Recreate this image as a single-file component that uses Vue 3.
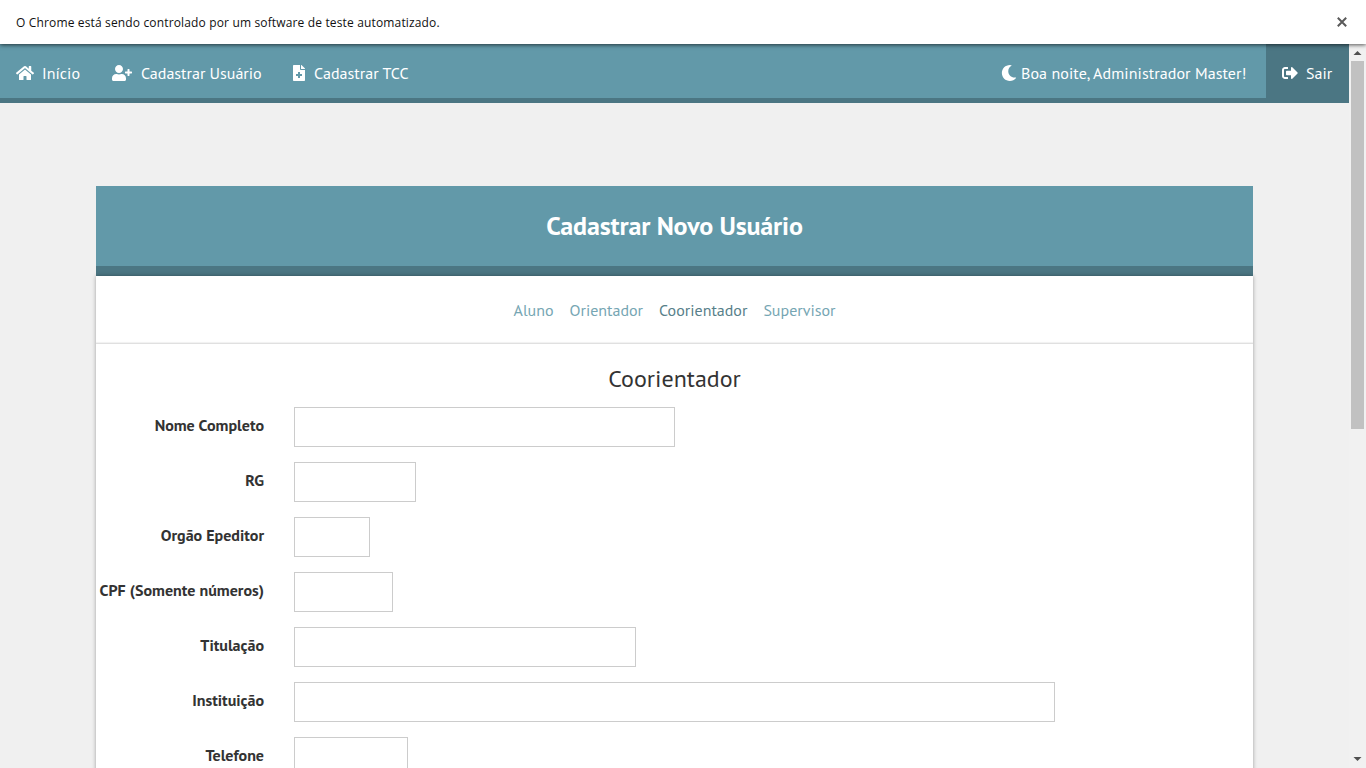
<script setup>
const icons = {
  home: { w: 576, d: 'M280.37 148.26L96 300.11V464a16 16 0 0 0 16 16l112.06-.29a16 16 0 0 0 15.92-16V368a16 16 0 0 1 16-16h64a16 16 0 0 1 16 16v95.64a16 16 0 0 0 16 16.05L464 480a16 16 0 0 0 16-16V300L295.67 148.26a12.19 12.19 0 0 0-15.3 0zM571.6 251.47L488 182.56V44.05a12 12 0 0 0-12-12h-56a12 12 0 0 0-12 12v72.61L318.47 43a48 48 0 0 0-61 0L4.34 251.47a12 12 0 0 0-1.6 16.9l25.5 31A12 12 0 0 0 45.15 301l235.22-193.74a12.19 12.19 0 0 1 15.3 0L530.9 301a12 12 0 0 0 16.9-1.6l25.5-31a12 12 0 0 0-1.7-16.93z' },
  user: { w: 640, d: 'M624 208h-64v-64c0-8.8-7.2-16-16-16h-32c-8.8 0-16 7.2-16 16v64h-64c-8.8 0-16 7.2-16 16v32c0 8.8 7.2 16 16 16h64v64c0 8.8 7.2 16 16 16h32c8.8 0 16-7.2 16-16v-64h64c8.8 0 16-7.2 16-16v-32c0-8.8-7.2-16-16-16zm-400 48c70.7 0 128-57.3 128-128S294.7 0 224 0 96 57.3 96 128s57.3 128 128 128zm89.6 32h-16.7c-22.2 10.2-46.9 16-72.9 16s-50.6-5.8-72.9-16h-16.7C60.2 288 0 348.2 0 422.4V464c0 26.5 21.5 48 48 48h352c26.5 0 48-21.5 48-48v-41.6c0-74.2-60.2-134.4-134.4-134.4z' },
  file: { w: 384, d: 'M377 105L279.1 7c-4.5-4.5-10.6-7-17-7H256v128h128v-6.1c0-6.3-2.5-12.4-7-16.9zm-153 31V0H24C10.7 0 0 10.7 0 24v464c0 13.3 10.7 24 24 24h336c13.3 0 24-10.7 24-24V160H248c-13.2 0-24-10.8-24-24zm64 160v48c0 4.4-3.6 8-8 8h-56v56c0 4.4-3.6 8-8 8h-48c-4.4 0-8-3.6-8-8v-56h-56c-4.4 0-8-3.6-8-8v-48c0-4.4 3.6-8 8-8h56v-56c0-4.4 3.6-8 8-8h48c4.4 0 8 3.6 8 8v56h56c4.4 0 8 3.6 8 8z' },
}
const links = [
  { icon: icons.home, text: 'Início', cls: 'l-home' },
  { icon: icons.user, text: 'Cadastrar Usuário', cls: 'l-user' },
  { icon: icons.file, text: 'Cadastrar TCC', cls: 'l-tcc' },
]
const tabs = [
  { text: 'Aluno' },
  { text: 'Orientador' },
  { text: 'Coorientador', active: true },
  { text: 'Supervisor' },
]
const fields = [
  { label: 'Nome Completo', width: 381 },
  { label: 'RG', width: 122 },
  { label: 'Orgão Epeditor', width: 76 },
  { label: 'CPF (Somente números)', width: 99 },
  { label: 'Titulação', width: 342 },
  { label: 'Instituição', width: 761 },
  { label: 'Telefone', width: 114 },
]
</script>

<template>
  <div class="window">
    <div class="infobar">
      <span class="notice">O Chrome está sendo controlado por um software de teste automatizado.</span>
      <svg class="close" viewBox="0 0 10 10"><path d="M.8.8 9.2 9.2M9.2.8.8 9.2" /></svg>
    </div>
    <div class="viewport">
      <div class="page">
        <nav class="nav">
          <a v-for="l in links" :key="l.text" class="link" :class="l.cls">
            <svg class="icon" :viewBox="`0 0 ${l.icon.w} 512`" :style="{ width: l.icon.w / 32 + 'px' }"><path :d="l.icon.d" /></svg>
            <span class="txt">{{ l.text }}</span>
          </a>
          <div class="greeting">
            <svg class="icon moon" viewBox="0 0 512 512"><path d="M283.211 512c78.962 0 151.079-35.925 198.857-94.792 7.068-8.708-.639-21.43-11.562-19.35-124.203 23.654-238.262-71.576-238.262-196.954 0-72.222 38.662-138.635 101.498-174.394 9.686-5.512 7.25-20.197-3.756-22.23A258.156 258.156 0 0 0 283.211 0c-141.309 0-256 114.511-256 256 0 141.309 114.511 256 256 256z" /></svg>
            <span class="txt">Boa noite, Administrador Master!</span>
          </div>
          <a class="logout">
            <svg class="icon" viewBox="0 0 512 512"><path d="M497 273L329 441c-15 15-41 4.5-41-17v-96H152c-13.3 0-24-10.7-24-24v-96c0-13.3 10.7-24 24-24h136V88c0-21.4 25.9-32 41-17l168 168c9.3 9.4 9.3 24.6 0 34zM192 436v-40c0-6.6-5.4-12-12-12H96c-17.7 0-32-14.3-32-32V160c0-17.7 14.3-32 32-32h84c6.6 0 12-5.4 12-12V76c0-6.6-5.4-12-12-12H96c-53 0-96 43-96 96v192c0 53 43 96 96 96h84c6.6 0 12-5.4 12-12z" /></svg>
            <span class="txt">Sair</span>
          </a>
        </nav>
        <main class="card">
          <h1 class="title">Cadastrar Novo Usuário</h1>
          <div class="body">
            <div class="tabs">
              <a v-for="t in tabs" :key="t.text" class="tab" :class="{ active: t.active }">{{ t.text }}</a>
            </div>
            <h2 class="subtitle">Coorientador</h2>
            <div v-for="f in fields" :key="f.label" class="row">
              <label class="label">{{ f.label }}</label>
              <input class="input" type="text" :style="{ width: f.width + 'px' }">
            </div>
          </div>
        </main>
      </div>
      <div class="scrollbar">
        <svg class="arrow" viewBox="0 0 17 17"><path d="M4.5 11 8.5 7l4 4z" /></svg>
        <div class="thumb"></div>
        <svg class="arrow" viewBox="0 0 17 17"><path d="M4.5 6 8.5 10l4-4z" /></svg>
      </div>
    </div>
  </div>
</template>

<style>
body { overflow: hidden; }
</style>

<style scoped>
.window { width: 1366px; height: 768px; display: flex; flex-direction: column; overflow: hidden; background: #f0f0f0; font-family: "PT Sans", Lato, sans-serif; }
.infobar { height: 44px; flex: none; box-sizing: border-box; padding: 0 19px 0 16px; display: flex; align-items: center; justify-content: space-between; background: #fff; box-shadow: 0 1px 4px rgba(0, 0, 0, .65); position: relative; z-index: 2; }
.notice { padding-top: 2px; font: 12px/16px "Segoe UI", "Open Sans", sans-serif; letter-spacing: .15px; color: #111; }
.close { width: 10px; height: 10px; fill: none; stroke: #5a5a5a; stroke-width: 2; }
.viewport { flex: 1; min-height: 0; display: flex; }
.page { width: 1349px; height: 724px; overflow: hidden; }
.nav { height: 59px; box-sizing: border-box; display: flex; align-items: stretch; background: #6299a9; border-bottom: 5px solid #4b7683; color: #fff; font-size: 16px; line-height: 24px; }
.link { box-sizing: border-box; display: flex; align-items: center; padding: 4px 0 0 16px; gap: 8px; letter-spacing: .04px; }
.txt { white-space: nowrap; }
.icon { height: 16px; width: 16px; flex: none; fill: #fff; display: block; }
.l-home { width: 96px; }
.l-user { width: 181px; gap: 9px; letter-spacing: 0; }
.l-tcc { gap: 9px; }
.greeting { margin-left: auto; width: 265px; box-sizing: border-box; display: flex; align-items: center; padding-top: 4px; gap: 4px; letter-spacing: .08px; }
.logout { width: 83px; height: 59px; box-sizing: border-box; padding: 0 0 1px 16px; display: flex; align-items: center; gap: 8px; background: #4b7683; }
.card { width: 1157px; margin: 83px 0 0 96px; }
.title { margin: 0; height: 90px; box-sizing: border-box; border-bottom: 10px solid #4b7683; background: #6299a9; color: #fff; display: flex; align-items: center; justify-content: center; font-size: 26px; line-height: 36px; font-weight: 700; letter-spacing: -.14px; }
.body { height: 700px; background: #fff; box-shadow: 0 0 4px rgba(0, 0, 0, .35); color: #333; }
.tabs { height: 68px; box-sizing: border-box; border-bottom: 1px solid #e0e0e0; box-shadow: inset 0 -1px 1px #f1f1f1; display: flex; justify-content: center; align-items: center; gap: 16px; font-size: 16px; line-height: 24px; }
.tab { color: #76a6b3; white-space: nowrap; }
.tab.active { color: #587f8a; }
.subtitle { margin: 0; height: 63px; box-sizing: border-box; padding-top: 19px; text-align: center; font-size: 24px; line-height: 32px; font-weight: 400; }
.row { display: flex; height: 40px; margin-bottom: 15px; }
.label { width: 168px; margin-right: 30px; flex: none; display: flex; justify-content: flex-end; white-space: nowrap; font-size: 16px; line-height: 36px; font-weight: 700; }
.input { height: 40px; box-sizing: border-box; margin: 0; border: 1px solid #ccc; border-radius: 0; background: #fff; padding: 0 8px; outline: none; }
.scrollbar { width: 17px; height: 724px; background: #f1f1f1; display: flex; flex-direction: column; }
.arrow { width: 17px; height: 17px; flex: none; fill: #505050; display: block; }
.thumb { width: 13px; height: 368px; margin: 0 2px auto; background: #c1c1c1; }
</style>
